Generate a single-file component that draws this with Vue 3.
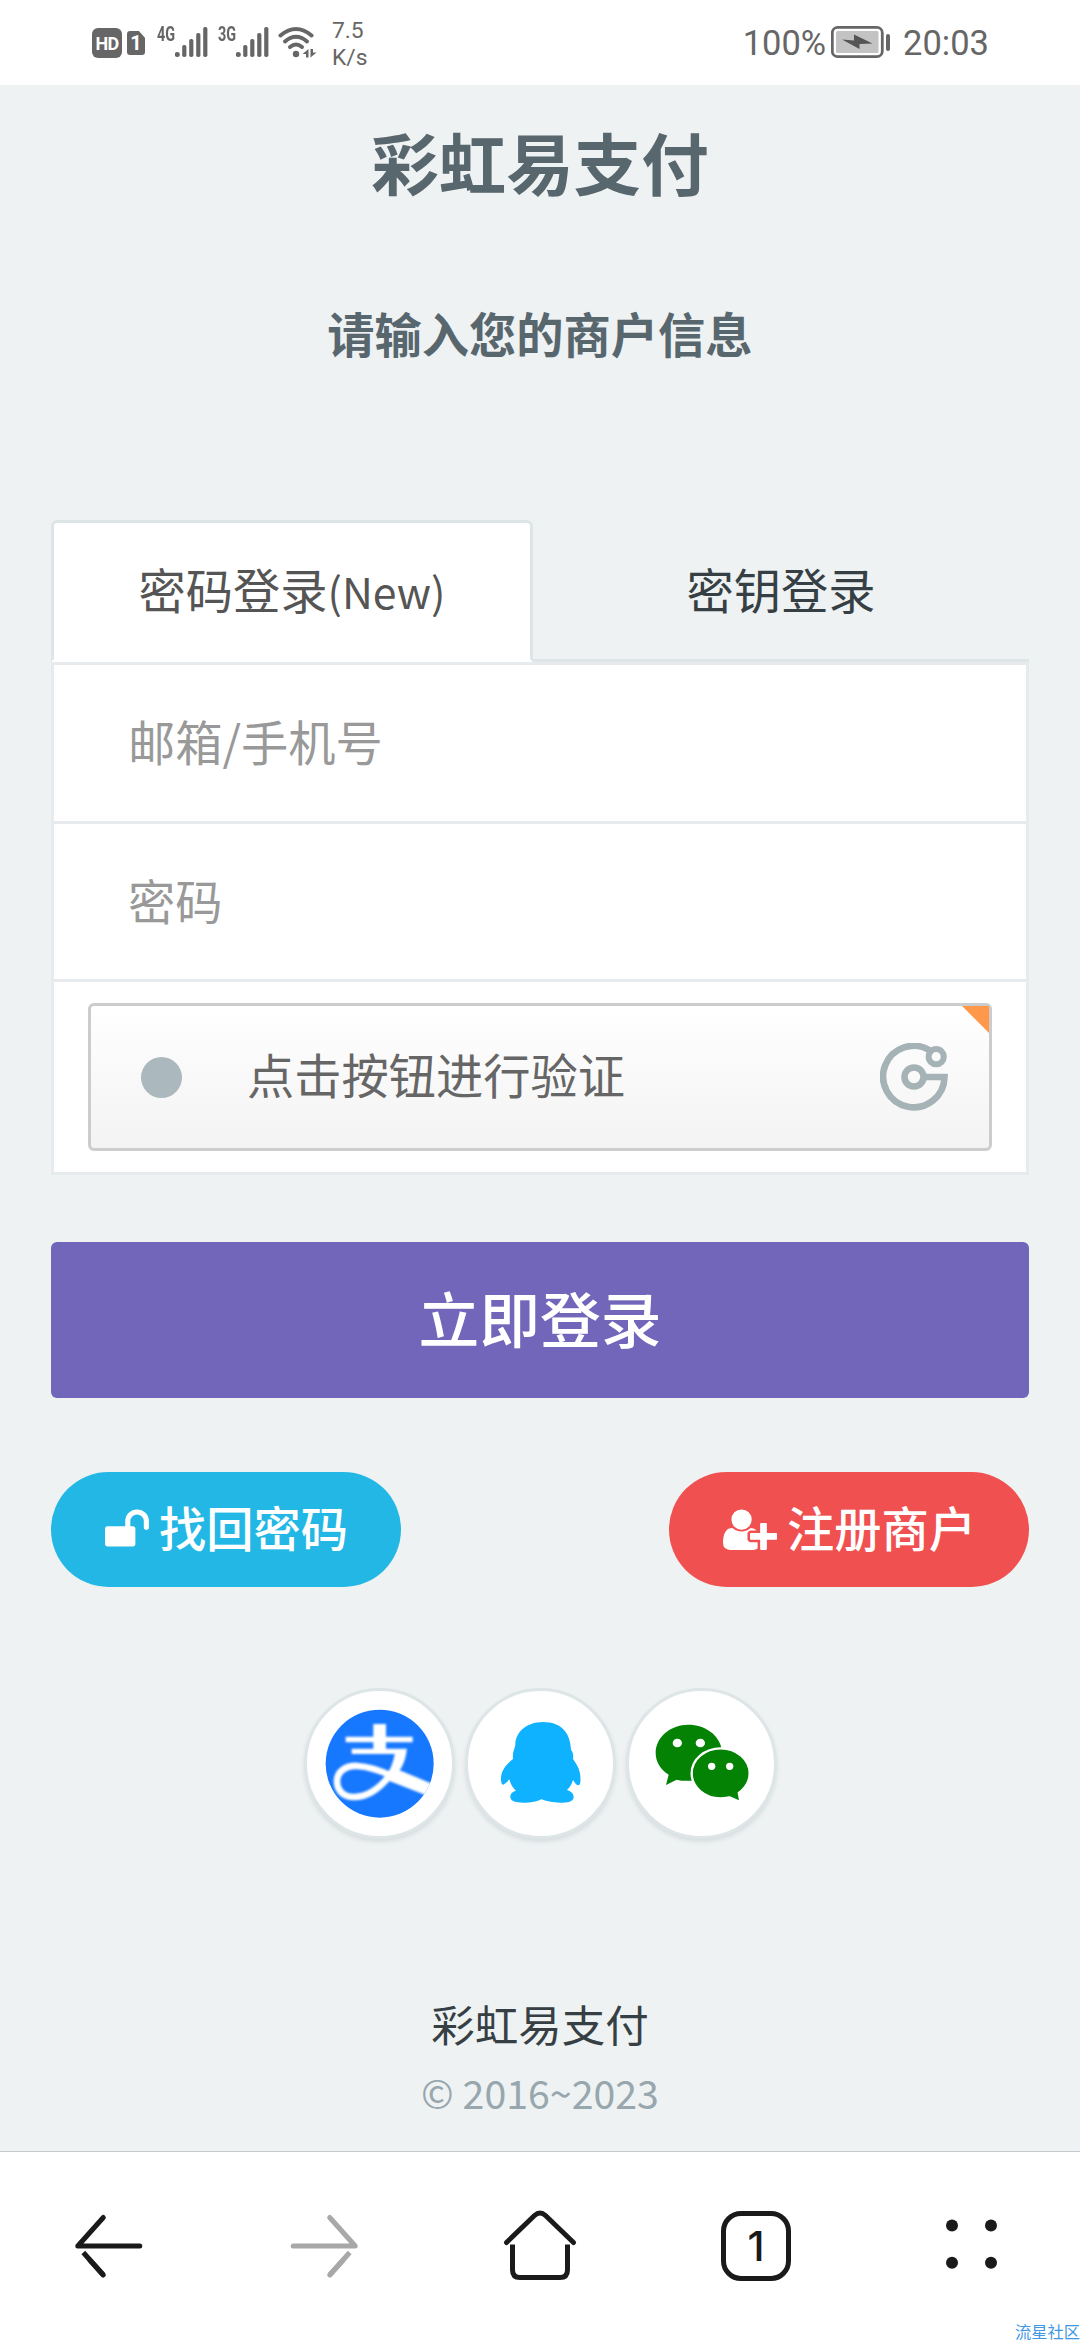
<script setup>
import { ref } from 'vue'

const account = ref('')
const password = ref('')
const networks = [
  { label: '4G', key: 'sim1' },
  { label: '3G', key: 'sim2' },
]
</script>

<template>
  <div class="screen">
    <header class="status">
      <div class="status-left">
        <span class="hd">HD</span>
        <span class="sim">1</span>
        <div v-for="n in networks" :key="n.key" class="network">
          <span class="gen">{{ n.label }}</span>
          <svg class="bars" width="33" height="32" viewBox="0 0 33 32">
            <circle cx="2.3" cy="28.5" r="2.5" />
            <rect x="7.2" y="19" width="4.2" height="12" rx="1.8" />
            <rect x="14.2" y="13" width="4.2" height="18" rx="1.8" />
            <rect x="21.2" y="7" width="4.2" height="24" rx="1.8" />
            <rect x="28.2" y="1" width="4.2" height="30" rx="1.8" />
          </svg>
        </div>
        <svg class="wifi" width="40" height="34" viewBox="0 0 40 34">
          <g fill="none" stroke="#666" stroke-width="4" stroke-linecap="round">
            <path d="M2.5 9.5Q18 -3.5 33.5 9.5" />
            <path d="M7 15.5Q18 6 29 15.5" />
            <path d="M12 21Q18 16 24 21" />
          </g>
          <circle cx="18" cy="28" r="3.2" fill="#666" />
          <path d="M24.5 28L30.500 23V31.500H28V28ZM38.500 26.500L32.500 31.500V23H35V26.500Z" fill="#666" />
        </svg>
        <div class="speed"><span>7.5</span><span>K/s</span></div>
      </div>
      <div class="status-right">
        <span class="clock">100%</span>
        <svg class="battery" width="60" height="34" viewBox="0 0 60 34">
          <rect x="1.3" y="2.3" width="50" height="29.4" rx="5.5" fill="none" stroke="#666" stroke-width="2.8" />
          <rect x="5" y="6" width="42.500" height="22" rx="1.500" fill="#c3c3c3" />
          <path d="M11 14.500L23 15.500V9.500L41.500 18.500L28.500 19V24Z" fill="#555" />
          <rect x="55" y="9" width="4" height="17" rx="2" fill="#666" />
        </svg>
        <span class="clock">20:03</span>
      </div>
    </header>

    <main class="page">
      <h1 class="title">彩虹易支付</h1>
      <p class="subtitle">请输入您的商户信息</p>

      <nav class="tabs">
        <a class="tab active">密码登录<span class="latin">(New)</span></a>
        <a class="tab">密钥登录</a>
      </nav>

      <form class="form" @submit.prevent>
        <input v-model="account" class="field" type="text" placeholder="邮箱/手机号" />
        <input v-model="password" class="field" type="password" placeholder="密码" />
        <div class="captcha-row">
          <div class="captcha">
            <span class="dot"></span>
            <span class="captcha-text">点击按钮进行验证</span>
            <svg class="geetest" width="68" height="68" viewBox="0 0 68 68">
              <g fill="none" stroke="#a5b2b6" stroke-width="6.6">
                <path d="M50 7.500A30.700 30.700 0 1 0 64.500 34H46" />
                <circle cx="34" cy="34" r="9.500" />
                <circle cx="56.200" cy="13.700" r="7.600" stroke-width="6" />
              </g>
            </svg>
            <span class="corner"></span>
          </div>
        </div>
      </form>

      <button class="submit">立即登录</button>

      <div class="links">
        <a class="pill find">
          <svg width="43.900" height="47.250" viewBox="0 0 1664 1792" fill="#fff">
            <path d="M1664 576v256q0 26-19 45t-45 19h-64q-26 0-45-19t-19-45v-256q0-106-75-181t-181-75-181 75-75 181v192h96q40 0 68 28t28 68v576q0 40-28 68t-68 28h-960q-40 0-68-28t-28-68v-576q0-40 28-68t68-28h672v-192q0-185 131.500-316.500t316.500-131.500 316.500 131.500 131.500 316.500z" />
          </svg>
          <span>找回密码</span>
        </a>
        <a class="pill register">
          <svg width="54" height="47.250" viewBox="0 0 2048 1792" fill="#fff">
            <path d="M704 896q-159 0-271.500-112.500t-112.500-271.500 112.500-271.500 271.500-112.500 271.500 112.500 112.500 271.500-112.500 271.500-271.500 112.500zm960 128h352q13 0 22.500 9.500t9.500 22.500v192q0 13-9.500 22.500t-22.500 9.500h-352v352q0 13-9.500 22.500t-22.500 9.500h-192q-13 0-22.500-9.500t-9.500-22.500v-352h-352q-13 0-22.500-9.500t-9.500-22.500v-192q0-13 9.500-22.500t22.500-9.500h352v-352q0-13 9.500-22.500t22.500-9.500h192q13 0 22.500 9.500t9.500 22.500v352zm-736 224q0 52 38 90t90 38h256v238q-68 50-171 50h-874q-121 0-194-69t-73-190q0-53 3.500-103.500t14-109 26.500-108.500 43-97.500 62-81 85.500-53.500 111.500-20q19 0 39 17 79 61 154.500 91.500t164.500 30.500 164.500-30.500 154.500-91.500q20-17 39-17 132 0 217 96h-223q-52 0-90 38t-38 90v192z" />
          </svg>
          <span>注册商户</span>
        </a>
      </div>

      <div class="socials">
        <a class="social">
          <svg width="145" height="145" viewBox="49 64 435 435">
            <defs>
              <clipPath id="badge"><circle cx="267" cy="282" r="162" /></clipPath>
              <filter id="soft"><feGaussianBlur stdDeviation="3" /></filter>
            </defs>
            <circle cx="267" cy="282" r="162" fill="#1677ff" />
            <g clip-path="url(#badge)">
              <g filter="url(#soft)">
                <path d="M248 163H286V245H248Z M165 201H366V218H165Z M183 237H349L346 253H183Z" fill="#fff" />
                <path d="M331 245Q323 285 297 318C270 352 235 382 190 382C158 382 139 362 139 335C139 304 168 287 200 289C235 291 262 300 300 317" fill="none" stroke="#fff" stroke-width="20" />
                <path d="M313 250H347Q342 281 327 302L424 342L410 378L296 334Q280 350 262 362Q305 300 313 250Z" fill="#fff" />
              </g>
            </g>
          </svg>
        </a>
        <a class="social">
          <svg width="145" height="145" viewBox="532 64 435 435">
            <path d="M757 157C705 157 674 190 674 225C672 238 665 245 667 268C640 289 630 310 631 330C632 345 636 347 640 344C648 340 653 332 656 329C660 345 667 355 676 363C664 366 659 373 659 383C660 396 680 400 705 399C730 398 742 394 752 389C765 394 790 400 815 399C840 398 849 392 849 381C848 370 840 365 829 361C840 350 844 342 847 331C852 340 858 347 863 347C870 345 870 335 869 318C867 295 855 280 847 268C849 258 847 248 841 240C839 190 812 157 757 157Z" fill="#0fb2ff" />
          </svg>
        </a>
        <a class="social">
          <svg width="145" height="145" viewBox="1015 64 435 435">
            <g fill="#048204">
              <path d="M1193 165C1139 165 1095 203 1095 250C1095 277 1110 300 1134 315L1126 346L1158 330Q1175 335 1206 333L1293 238C1286 196 1243 165 1193 165Z" />
              <ellipse cx="1290" cy="311" rx="87" ry="75" stroke="#fff" stroke-width="7" />
              <path d="M1316 379L1345 392L1340 365Z" />
            </g>
            <g fill="#fff">
              <ellipse cx="1160" cy="220" rx="14" ry="13" />
              <ellipse cx="1229" cy="220" rx="14" ry="13" />
              <circle cx="1263" cy="290" r="11" />
              <circle cx="1317" cy="290" r="11" />
            </g>
          </svg>
        </a>
      </div>

      <footer class="footer">
        <a class="brand">彩虹易支付</a>
        <span class="copyright">© 2016~2023</span>
      </footer>
    </main>

    <nav class="toolbar">
      <div class="tool">
        <svg width="80" height="80" viewBox="2.200 0 80 80" class="line">
          <path d="M74 40H12L37.500 11.500" stroke-linejoin="round" />
          <path d="M17.500 46.500L37.500 69" stroke-linecap="butt" />
          <path d="M24 54L37.500 69" />
        </svg>
      </div>
      <div class="tool">
        <svg width="80" height="80" viewBox="-3.200 0 80 80" class="line muted">
          <path d="M6 40H68L42.500 11.500" stroke-linejoin="round" />
          <path d="M62.500 46.500L42.500 69" stroke-linecap="butt" />
          <path d="M56 54L42.500 69" />
        </svg>
      </div>
      <div class="tool">
        <svg width="80" height="80" viewBox="0 0 80 80" class="line">
          <path d="M6.500 36.500L34.500 9.500Q40 4.500 45.500 9.500L73.500 36.500" />
          <path d="M12.500 38.500V64Q12.500 71.500 20 71.500H60Q67.500 71.500 67.500 64V38.500" stroke-linecap="butt" />
        </svg>
      </div>
      <div class="tool"><span class="count">1</span></div>
      <div class="tool">
        <svg width="80" height="80" viewBox="0 0 80 80" fill="#1a1a1a">
          <circle cx="20" cy="19.500" r="6" />
          <circle cx="59" cy="19.500" r="6" />
          <circle cx="20" cy="56.800" r="6" />
          <circle cx="59" cy="56.800" r="6" />
        </svg>
      </div>
      <span class="mark">流星社区</span>
    </nav>
  </div>
</template>

<style>
body {
  margin: 0;
  background: #eef2f3;
}
</style>

<style scoped>
.screen {
  box-sizing: border-box;
  width: 1080px;
  height: 2340px;
  overflow: hidden;
  display: flex;
  flex-direction: column;
  background: #eef2f3;
  font-family: "Noto Sans CJK SC", sans-serif;
}
.screen * {
  box-sizing: border-box;
}
svg {
  display: block;
  flex: none;
}

/* status bar */
.status {
  flex: none;
  height: 85px;
  padding: 0 91px 0 92px;
  display: flex;
  justify-content: space-between;
  background: #fff;
  color: #666;
  font-family: Roboto, sans-serif;
}
.status-left,
.status-right {
  display: flex;
  align-items: flex-start;
}
.hd {
  width: 30px;
  height: 30px;
  margin-top: 28px;
  border-radius: 6px;
  background: #666;
  color: #fff;
  font: 700 18px/31px Roboto, sans-serif;
  letter-spacing: -0.8px;
  text-align: center;
}
.sim {
  width: 18px;
  height: 24px;
  margin: 31px 12px 0 5px;
  border-radius: 3px;
  background: #666;
  clip-path: polygon(0 0, 66% 0, 100% 28%, 100% 100%, 0 100%);
  color: #fff;
  font: 700 20px/25px Roboto, sans-serif;
  text-align: center;
}
.network {
  width: 61px;
  display: flex;
  align-items: flex-start;
}
.gen {
  width: 18px;
  margin-top: 24px;
  font: 700 19.5px/21px Roboto, sans-serif;
  transform: scaleX(0.74);
  transform-origin: 0 0;
}
.bars {
  margin-top: 26px;
  fill: #666;
}
.wifi {
  margin: 26px 0 0 -1px;
}
.speed {
  margin: 17px 0 0 14px;
  display: flex;
  flex-direction: column;
  font-size: 22.8px;
  line-height: 27px;
}
.clock {
  margin-top: 22px;
  font-size: 34.5px;
  line-height: 42px;
}
.battery {
  margin: 25px 12px 0 5px;
}

/* login page */
.page {
  flex: none;
  height: 2066px;
  padding: 31px 51px 0;
}
.title {
  margin: 0;
  color: #58666e;
  font-size: 67.5px;
  font-weight: 700;
  line-height: 90px;
  text-align: center;
}
.subtitle {
  margin: 97px 0 157px;
  color: #58666e;
  font-size: 47.25px;
  font-weight: 700;
  line-height: 60px;
  text-align: center;
}
.tabs {
  display: flex;
  height: 142px;
}
.tab {
  flex: 1;
  border-bottom: 3px solid #dee5e7;
  color: #363f44;
  font-size: 47.25px;
  line-height: 137px;
  text-align: center;
}
.tab.active {
  flex: none;
  width: 482px;
  border: 3px solid #dee5e7;
  border-bottom-color: #fff;
  border-radius: 6px 6px 0 0;
  background: #fff;
  color: #555;
  line-height: 132px;
}
.latin {
  font-size: 0.905em;
  line-height: 1;
}
.form {
  height: 513px;
  border: 3px solid #e7ebed;
  background: #fff;
}
.field {
  display: block;
  width: 100%;
  height: 159px;
  margin: 0;
  padding: 0 74px 6px;
  border: 0;
  border-bottom: 3px solid #e7ebed;
  outline: 0;
  background: transparent;
  font: 47.25px "Noto Sans CJK SC", sans-serif;
}
.field + .field {
  height: 158px;
  padding-bottom: 4px;
}
.field::placeholder {
  color: #999;
  opacity: 1;
}
.captcha-row {
  padding: 21px 34px 0;
}
.captcha {
  position: relative;
  height: 148px;
  padding: 0 41px 0 50px;
  display: flex;
  align-items: center;
  border: 3px solid #ccc;
  border-radius: 6px;
  background: linear-gradient(#fff, #f3f3f3);
}
.dot {
  width: 41px;
  height: 41px;
  border-radius: 50%;
  background: #abb8bd;
}
.captcha-text {
  flex: 1;
  margin: -7px 0 0 65px;
  color: #666;
  font-size: 47.25px;
  line-height: 70px;
}
.corner {
  position: absolute;
  top: 0;
  right: 0;
  width: 27px;
  height: 27px;
  background: #ff984b;
  clip-path: polygon(0 0, 100% 0, 100% 100%);
}
.submit {
  display: block;
  width: 100%;
  height: 156px;
  margin: 67px 0 74px;
  padding: 0 0 6px;
  border: 0;
  border-radius: 6px;
  background: #7266ba;
  color: #fff;
  font: 500 60.75px/90px "Noto Sans CJK SC", sans-serif;
}
.links {
  display: flex;
  justify-content: space-between;
}
.pill {
  height: 115px;
  display: flex;
  align-items: center;
  gap: 10px;
  padding-left: 54px;
  border-radius: 58px;
  color: #fff;
  font-size: 47.25px;
  font-weight: 500;
}
.pill span {
  margin-top: -6px;
  line-height: 70px;
}
.pill svg {
  margin-top: 1px;
}
.find {
  width: 350px;
  background: #23b7e5;
}
.register {
  width: 360px;
  background: #f05050;
}
.socials {
  margin-top: 101px;
  display: flex;
  justify-content: center;
  gap: 10px;
}
.social {
  width: 151px;
  height: 151px;
  border: 3px solid #dee5e7;
  border-radius: 50%;
  background: #fff;
  box-shadow: 0 3px 4px rgba(90, 105, 115, 0.15);
}
.footer {
  margin-top: 151px;
  display: flex;
  flex-direction: column;
  align-items: center;
  font-size: 43.5px;
  line-height: 68px;
}
.brand {
  color: #363f44;
}
.copyright {
  color: #98a6ad;
  font-size: 39.3px;
}

/* browser toolbar */
.toolbar {
  position: relative;
  flex: 1;
  display: flex;
  border-top: 1px solid #c8cbcd;
  background: #fff;
}
.tool {
  width: 216px;
  height: 188px;
  display: flex;
  align-items: center;
  justify-content: center;
}
.line {
  fill: none;
  stroke: #1a1a1a;
  stroke-width: 5;
  stroke-linecap: round;
}
.muted {
  stroke: #a8a8a8;
}
.count {
  width: 70px;
  height: 70px;
  border: 5px solid #1a1a1a;
  border-radius: 20px;
  color: #1a1a1a;
  font: 500 41px/61px Inter, sans-serif;
  text-align: center;
}
.mark {
  position: absolute;
  left: 1015px;
  top: 169px;
  color: #3f97e6;
  font-size: 16.25px;
  line-height: 20px;
  white-space: nowrap;
}
</style>
